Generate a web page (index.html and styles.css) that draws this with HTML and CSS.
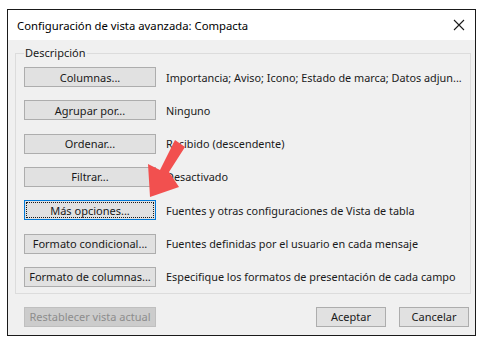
FILE: index.html
```html
<!DOCTYPE html>
<html lang="es">
<head>
    <meta charset="UTF-8">
    <title>Configuración de vista avanzada: Compacta</title>
    <link rel="stylesheet" href="styles.css">
</head>
<body>
    <div class="dialog">
        <div class="titlebar">
            <span class="title">Configuración de vista avanzada: Compacta</span>
            <svg class="close" width="12" height="12" viewBox="0 0 12 12">
                <path d="M1 1 L11 11 M11 1 L1 11" stroke="#1a1a1a" stroke-width="1.1" fill="none"/>
            </svg>
        </div>
        <div class="content">
            <fieldset class="group">
                <legend>Descripción</legend>
                <div class="rows">
                    <div class="row">
                        <button class="btn wide">Columnas...</button>
                        <span class="desc">Importancia; Aviso; Icono; Estado de marca; Datos adjun...</span>
                    </div>
                    <div class="row">
                        <button class="btn wide">Agrupar por...</button>
                        <span class="desc">Ninguno</span>
                    </div>
                    <div class="row">
                        <button class="btn wide">Ordenar...</button>
                        <span class="desc">Recibido (descendente)</span>
                    </div>
                    <div class="row">
                        <button class="btn wide">Filtrar...</button>
                        <span class="desc">Desactivado</span>
                    </div>
                    <div class="row">
                        <button class="btn wide focused">Más opciones...</button>
                        <span class="desc">Fuentes y otras configuraciones de Vista de tabla</span>
                    </div>
                    <div class="row">
                        <button class="btn wide">Formato condicional...</button>
                        <span class="desc">Fuentes definidas por el usuario en cada mensaje</span>
                    </div>
                    <div class="row">
                        <button class="btn wide">Formato de columnas...</button>
                        <span class="desc">Especifique los formatos de presentación de cada campo</span>
                    </div>
                </div>
            </fieldset>
            <div class="footer">
                <button class="btn wide" disabled>Restablecer vista actual</button>
                <div class="actions">
                    <button class="btn small">Aceptar</button>
                    <button class="btn small">Cancelar</button>
                </div>
            </div>
        </div>
    </div>
    <!-- red pointer arrow drawn over the dialog -->
    <svg class="arrow" width="50" height="70" viewBox="0 0 50 70">
        <polygon points="33,3 43,10 27,35 37,50 8,60 6,27 18,33" fill="#f2504f"/>
    </svg>
</body>
</html>
```

FILE: styles.css
```css
body {
    margin: 0;
    background: #fff;
    font-family: "Noto Sans", sans-serif;
    font-size: 11px;
    color: #1a1a1a;
}
.dialog {
    margin: 9px 0 0 7px;
    width: 467px;
    border: 1px solid #1a1a1a;
    background: #f0f0f0;
}
.titlebar {
    height: 30px;
    background: #fff;
    display: flex;
    align-items: center;
    justify-content: space-between;
    padding: 0 9px 0 9px;
}
.title {
    font-size: 11.3px;
    color: #000;
}
.close {
    margin-right: 1px;
}
.content {
    padding: 5px 6px 8px 7px;
}
.group {
    margin: 0;
    padding: 6px 8px 6px 8px;
    border: 1px solid #dcdcdc;
}
.group legend {
    padding: 0 1px;
    margin-left: 0;
    line-height: 16px;
}
.rows {
    display: grid;
    row-gap: 13.33px;
}
.row {
    display: flex;
    align-items: center;
    gap: 10px;
}
.btn {
    height: 20px;
    padding: 0;
    border: 1px solid #adadad;
    background: #e1e1e1;
    font-family: inherit;
    font-size: 11px;
    color: #1a1a1a;
    white-space: nowrap;
}
.btn.wide {
    width: 132px;
}
.btn.small {
    width: 70px;
}
.btn.focused {
    border-color: #0078d7;
    outline: 1px dotted #1a1a1a;
    outline-offset: -3px;
}
.btn:disabled {
    background: #cccccc;
    border-color: #bfbfbf;
    color: #8d8d8d;
}
.desc {
    white-space: nowrap;
    font-size: 10.85px;
}
.footer {
    margin-top: 13px;
    margin-left: 9px;
    display: flex;
    justify-content: space-between;
}
.actions {
    display: flex;
    gap: 13px;
}
.arrow {
    position: absolute;
    left: 142px;
    top: 137px;
}
```
